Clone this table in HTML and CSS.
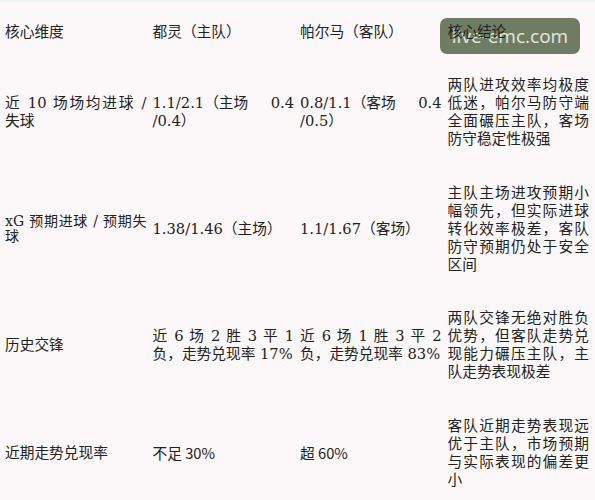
FILE: index.html
```html
<!DOCTYPE html>
<html lang="zh-CN">
<head>
<meta charset="utf-8">
<title>对比表</title>
<link rel="stylesheet" href="styles.css">
</head>
<body>
<div class="page">
  <table class="stats">
    <tr>
      <td>核心维度</td>
      <td>都灵（主队）</td>
      <td>帕尔马（客队）</td>
      <td><span class="head-over">核心结论</span></td>
    </tr>
    <tr>
      <td>近 10 场场均进球 / 失球</td>
      <td>1.1/2.1<span class="keep">（主场</span> 0.4<wbr>/0.4）</td>
      <td>0.8/1.1<span class="keep">（客场</span> 0.4<wbr>/0.5）</td>
      <td>两队进攻效率均极度低迷，帕尔马防守端全面碾压主队，客场防守稳定性极强</td>
    </tr>
    <tr>
      <td class="tight">xG 预期进球 / 预期失球</td>
      <td>1.38/1.46（主场）</td>
      <td>1.1/1.67（客场）</td>
      <td>主队主场进攻预期小幅领先，但实际进球转化效率极差，客队防守预期仍处于安全区间</td>
    </tr>
    <tr>
      <td>历史交锋</td>
      <td>近 6 场 2 胜 3 平 1 负，走势兑现率 17%</td>
      <td>近 6 场 1 胜 3 平 2 负，走势兑现率 83%</td>
      <td>两队交锋无绝对胜负优势，但客队走势兑现能力碾压主队，主队走势表现极差</td>
    </tr>
    <tr>
      <td>近期走势兑现率</td>
      <td class="sans">不足 30%</td>
      <td class="sans">超 60%</td>
      <td>客队近期走势表现远优于主队，市场预期与实际表现的偏差更小</td>
    </tr>
  </table>
  <div class="watermark">live-emc.com</div>
</div>
</body>
</html>
```

FILE: styles.css
```css
html, body {
  margin: 0;
  padding: 0;
  background: #fcf8f9;
}

.page {
  position: relative;
  width: 595px;
  height: 500px;
  overflow: hidden;
  border-top: 2px solid #eef3f6;
  box-sizing: border-box;
}

.stats {
  margin: 3px 0 0 2px;
  width: 590px;
  table-layout: fixed;
  border-collapse: collapse;
  font-family: "DejaVu Serif", "Noto Sans CJK SC", serif;
  font-size: 14.7px;
  line-height: 18px;
  color: #222222;
}

.stats td {
  width: 25%;
  padding: 17.75px 3px;
  vertical-align: middle;
  text-align: justify;
}

.stats td.tight {
  font-size: 14px;
  line-height: 15px;
}

.stats td.sans {
  font-family: "Noto Sans CJK SC", sans-serif;
}

.keep {
  display: inline-block;
}

.head-over {
  position: relative;
  z-index: 2;
}

.watermark {
  position: absolute;
  z-index: 1;
  left: 440px;
  top: 16px;
  width: 140px;
  height: 36px;
  border-radius: 7px;
  background: #6f7c63;
  color: #e4eadd;
  font-family: "Open Sans", sans-serif;
  font-size: 19px;
  line-height: 37px;
  text-align: center;
}
```
